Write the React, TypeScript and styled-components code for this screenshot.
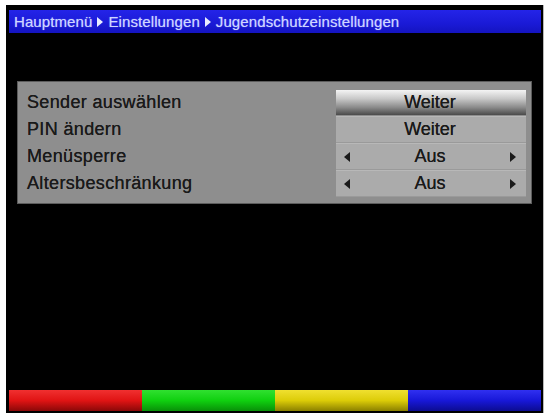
import React from 'react';
import styled, { createGlobalStyle } from 'styled-components';

const GlobalStyle = createGlobalStyle`
  html, body {
    margin: 0;
    padding: 0;
    background: #ffffff;
  }
  body {
    font-family: 'Liberation Sans', Arial, sans-serif;
  }
`;

const Frame = styled.div`
  width: 548px;
  height: 415px;
  padding: 5px 0 0 6px;
  box-sizing: border-box;
`;

const Screen = styled.div`
  width: 537px;
  height: 408px;
  background: #000;
  box-shadow: 1px 0 0 #b8b8b8;
  display: flex;
  flex-direction: column;
  padding: 5px 2px 2px 3px;
  box-sizing: border-box;
`;

const Header = styled.div`
  height: 23px;
  background: linear-gradient(#2424e8, #1a1ad6 60%, #1414c0);
  display: flex;
  align-items: center;
  padding-left: 5px;
  gap: 5px;
  color: #cfd6ff;
  font-size: 15px;
  letter-spacing: 0.1px;
  text-shadow: 0 0 1px #8890ff;
`;

const Crumb = styled.span`
  white-space: nowrap;
`;

const Arrow = styled.span`
  display: inline-block;
  width: 0;
  height: 0;
  border-top: 5px solid transparent;
  border-bottom: 5px solid transparent;
  border-left: 6px solid #e8ecff;
`;

const Panel = styled.div`
  margin: 48px 9px 0 8px;
  background: #8e8e8e;
  border: 1px solid #5c5c5c;
  padding: 7px 5px 6px 9px;
  display: flex;
  flex-direction: column;
`;

const Row = styled.div`
  height: 27px;
  display: flex;
  align-items: stretch;
`;

const Label = styled.div`
  flex: 1;
  display: flex;
  align-items: center;
  font-size: 18px;
  color: #1a1a1a;
  letter-spacing: 0.35px;
  text-shadow: 0 0 0.3px #1a1a1a;
`;

const Value = styled.div<{ $active?: boolean }>`
  width: 190px;
  box-sizing: border-box;
  display: flex;
  align-items: center;
  justify-content: space-between;
  padding: 0 10px 0 8px;
  font-size: 18px;
  color: #1a1a1a;
  text-shadow: 0 0 0.5px #1a1a1a;
  background: ${(p) =>
    p.$active
      ? 'linear-gradient(#f4f4f4, #c8c8c8 35%, #8a8a8a 70%, #4a4a4a)'
      : '#ababab'};
  border-bottom: 1px solid ${(p) => (p.$active ? '#8e8e8e' : '#9a9a9a')};
  border-top: 1px solid ${(p) => (p.$active ? '#8e8e8e' : '#b8b8b8')};
`;

const ValueText = styled.span`
  flex: 1;
  text-align: center;
`;

const SideArrow = styled.span<{ $dir: 'left' | 'right' }>`
  display: inline-block;
  width: 0;
  height: 0;
  border-top: 5px solid transparent;
  border-bottom: 5px solid transparent;
  ${(p) =>
    p.$dir === 'left'
      ? 'border-right: 6px solid #1a1a1a;'
      : 'border-left: 6px solid #1a1a1a;'}
`;

const Spacer = styled.div`
  flex: 1;
`;

const ColorBar = styled.div`
  height: 21px;
  display: grid;
  grid-template-columns: repeat(4, 1fr);
`;

const ColorKey = styled.div<{ $top: string; $mid: string; $bottom: string }>`
  background: linear-gradient(${(p) => p.$top}, ${(p) => p.$mid} 50%, ${(p) => p.$bottom});
`;

type Item = {
  label: string;
  value: string;
  arrows?: boolean;
  active?: boolean;
};

const items: Item[] = [
  { label: 'Sender auswählen', value: 'Weiter', active: true },
  { label: 'PIN ändern', value: 'Weiter' },
  { label: 'Menüsperre', value: 'Aus', arrows: true },
  { label: 'Altersbeschränkung', value: 'Aus', arrows: true },
];

export default function App() {
  return (
    <>
      <GlobalStyle />
      <Frame>
        <Screen>
          <Header>
            <Crumb>Hauptmenü</Crumb>
            <Arrow />
            <Crumb>Einstellungen</Crumb>
            <Arrow />
            <Crumb>Jugendschutzeinstellungen</Crumb>
          </Header>
          <Panel>
            {items.map((it) => (
              <Row key={it.label}>
                <Label>{it.label}</Label>
                <Value $active={it.active}>
                  {it.arrows && <SideArrow $dir="left" />}
                  <ValueText>{it.value}</ValueText>
                  {it.arrows && <SideArrow $dir="right" />}
                </Value>
              </Row>
            ))}
          </Panel>
          <Spacer />
          <ColorBar>
            <ColorKey $top="#f03030" $mid="#e01414" $bottom="#8a0808" />
            <ColorKey $top="#30e030" $mid="#10d010" $bottom="#089008" />
            <ColorKey $top="#f0e030" $mid="#dccc08" $bottom="#8a8000" />
            <ColorKey $top="#3030f0" $mid="#1818d8" $bottom="#0c0c90" />
          </ColorBar>
        </Screen>
      </Frame>
    </>
  );
}
